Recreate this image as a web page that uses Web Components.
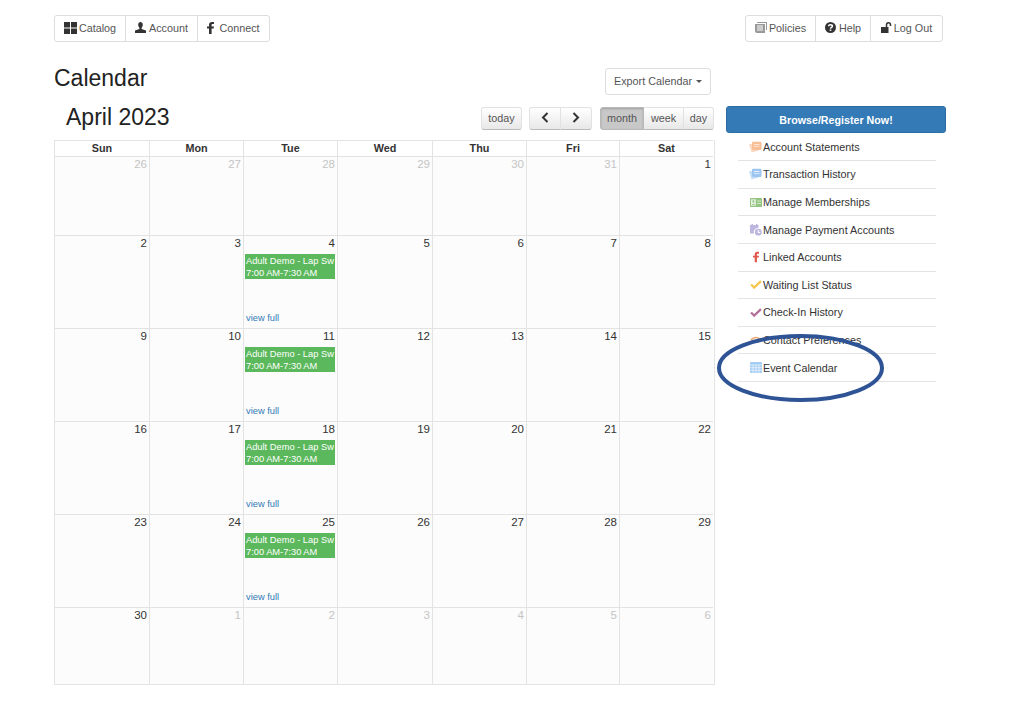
<!DOCTYPE html>
<html lang="en">
<head>
<meta charset="utf-8">
<title>Calendar</title>
<style>
html, body { margin: 0; padding: 0; background: #fff; }
body { font-family: "Liberation Sans", Arial, sans-serif; font-size: 11px; color: #333; }
</style>
</head>
<body>
<app-page></app-page>

<script>
const ICONS = {
  catalog: '<svg width="13" height="12" viewBox="0 0 13 12"><path fill="#333" d="M0 0h6v5.500H0zM7 0h6v5.500H7zM0 6.500h6V12H0zM7 6.500h6V12H7z"/></svg>',
  account: '<svg width="11" height="11" viewBox="0 0 11 11"><path fill="#333" d="M3.200 2.800C3.200 1 4.200 0 5.500 0s2.300 1 2.300 2.800c0 1.300-.6 2.500-1.200 3v1.100L11 8.600V11H0V8.600l4.400-1.700V5.800c-.6-.5-1.200-1.700-1.200-3z"/></svg>',
  connect: '<svg width="7" height="12" viewBox="0 0 7 12"><path fill="#333" d="M2 12V6.600H0V4.500h2V3C2 1 3.100 0 4.900 0H7v2.100H5.600c-.8 0-1 .4-1 1v1.400H7l-.3 2.100H4.600V12z"/></svg>',
  policies: '<svg width="12" height="11" viewBox="0 0 12 11"><path fill="#999" d="M2 0h10v8h-1V1H2zM0 2h10v9H2a2 2 0 0 1-2-2zm2 1.500v1h6v-1zm0 2v1h6v-1zm0 2v1h6v-1z" fill-rule="evenodd"/></svg>',
  help: '<svg width="11" height="11" viewBox="0 0 12 12"><circle cx="6" cy="6" r="6" fill="#333"/><path fill="none" stroke="#fff" stroke-width="1.700" d="M3.900 4.600C4 3.400 4.900 2.900 6 2.900c1.200 0 2.100.6 2.100 1.600 0 1.500-2.100 1.400-2.100 2.800"/><path fill="#fff" d="M5.100 8.200h1.800v1.500H5.100z"/></svg>',
  logout: '<svg width="11" height="11" viewBox="0 0 11 11"><path fill="#333" d="M0 5h7.500v6H0z"/><path fill="none" stroke="#333" stroke-width="1.500" d="M5.500 5V3c0-1.300.8-2.200 2-2.200s2 .9 2 2.200v1"/></svg>',
  statements: '<svg width="13" height="12" viewBox="0 0 13 12"><path fill="#fbd9c2" d="M0 3.500 8 1.500l2 8-7.500 2z"/><rect x="3" y=".8" width="9.500" height="8.200" rx="1.200" fill="#f8bf97"/><path fill="#fde8da" d="M5 3h5.500v.9H5zM5 5.200h5.500v.9H5z"/></svg>',
  history: '<svg width="13" height="12" viewBox="0 0 13 12"><path fill="#c5def7" d="M0 3.500 8 1.500l2 8-7.500 2z"/><rect x="3" y=".8" width="9.500" height="8.200" rx="1.200" fill="#9cc5f0"/><path fill="#e2eefb" d="M5 3h5.500v.9H5zM5 5.200h5.500v.9H5z"/></svg>',
  memberships: '<svg width="12" height="9" viewBox="0 0 12 9"><rect width="12" height="9" rx=".8" fill="#93c481"/><rect x="1" y="1.300" width="4.800" height="6.400" fill="#e9f3e4"/><circle cx="3.400" cy="3.400" r="1.100" fill="#93c481"/><path fill="#93c481" d="M1.800 6.800c0-1.500 3.200-1.500 3.200 0z"/><path fill="#d3e7ca" d="M7 2.500h4v1H7zM7 5h4v1H7z"/></svg>',
  payment: '<svg width="12" height="12" viewBox="0 0 12 12"><path fill="#bdb7df" d="M0 1h1.500V0H3v1h3V0h1.500v1H8.500v3H8a4 4 0 0 0-4 5.500H0z"/><circle cx="8.300" cy="8.200" r="3.400" fill="#bdb7df"/><path fill="#fff" d="M7.800 6h1v2h1.400v1H7.800z"/></svg>',
  linked: '<svg width="6" height="12" viewBox="0 0 7 12"><path fill="#e2574c" d="M2 12V6.600H0V4.500h2V3C2 1 3.100 0 4.900 0H7v2.100H5.600c-.8 0-1 .4-1 1v1.400H7l-.3 2.100H4.600V12z"/></svg>',
  waiting: '<svg width="12" height="9" viewBox="0 0 13 10"><path fill="none" stroke="#f7c64f" stroke-width="2.600" d="M1 5l3.500 3.400L12 1.200"/></svg>',
  checkin: '<svg width="12" height="9" viewBox="0 0 13 10"><path fill="none" stroke="#b56f9b" stroke-width="2.600" d="M1 5l3.500 3.400L12 1.200"/></svg>',
  contact: '<svg width="12" height="10" viewBox="0 0 13 10"><path fill="none" stroke="#f2a568" stroke-width="1.800" d="M1 5c3-3.600 8-3.600 11 0"/><path fill="none" stroke="#f2a568" stroke-width="1.800" d="M3.300 7.500c2-2 4.400-2 6.400 0"/></svg>',
  calendar: '<svg width="12" height="11" viewBox="0 0 12 11"><rect width="12" height="11" rx=".8" fill="#a4cdf3"/><path stroke="#e8f2fc" stroke-width=".8" d="M0 3h12M0 5.700h12M0 8.300h12M3 3v8M6 3v8M9 3v8"/></svg>'
};

// a row of joined white buttons, top of the page
class NavGroup extends HTMLElement {
  connectedCallback() {
    if (this.shadowRoot) return;
    this.attachShadow({ mode: "open" });
    this.shadowRoot.innerHTML = `
    <style>
      :host { display: inline-flex; height: 25px; border: 1px solid #ddd; border-radius: 3px; background: #fff; box-sizing: content-box; }
    </style>
    <slot></slot>`;
  }
}

class NavItem extends HTMLElement {
  connectedCallback() {
    if (this.shadowRoot) return;
    this.attachShadow({ mode: "open" });
    const icon = ICONS[this.getAttribute("icon")];
    const w = this.getAttribute("w");
    this.shadowRoot.innerHTML = `
    <style>
      :host { display: flex; align-items: center; justify-content: center; gap: var(--gap, 2px); width: ${w}px; box-sizing: border-box; padding-bottom: 2px; font-size: 10.800px; color: #555; border-left: 1px solid #ddd; }
      :host(:first-child) { border-left: 0; }
      svg { display: block; }
    </style>
    ${icon}<slot></slot>`;
  }
}

// toolbar button, gray gradient like fullcalendar's
class CalButton extends HTMLElement {
  connectedCallback() {
    if (this.shadowRoot) return;
    this.attachShadow({ mode: "open" });
    this.shadowRoot.innerHTML = `
    <style>
      :host { display: flex; align-items: center; justify-content: center; height: 23px; width: var(--w); box-sizing: border-box; padding-bottom: 2px; font-size: 10.800px; color: #555; background: linear-gradient(#fff, #e8e8e8); border: 1px solid #e2e2e2; border-bottom-color: #bbb; border-left-width: 0; }
      :host(:first-child) { border-left-width: 1px; border-radius: 3px 0 0 3px; }
      :host(:last-child) { border-radius: 0 3px 3px 0; }
      :host(:first-child:last-child) { border-radius: 3px; }
      :host([active]) { background: #c8c8c8; border-color: #b8b8b8; box-shadow: inset 0 1px 2px rgba(0,0,0,.2); }
      svg { display: block; }
    </style>
    <slot></slot>`;
  }
}

class CalToolbar extends HTMLElement {
  connectedCallback() {
    if (this.shadowRoot) return;
    this.attachShadow({ mode: "open" });
    this.shadowRoot.innerHTML = `
    <style>
      :host { display: flex; align-items: center; height: 33px; }
      h2 { margin: 0 0 3px 12px; font: 400 23px "Liberation Sans", Arial, sans-serif; color: #222; flex: 1; }
      .grp { display: flex; }
      .wrap { display: flex; gap: 7px; }
      .grp:last-child { margin-left: 1px; }
    </style>
    <h2><slot name="title"></slot></h2>
    <div class="wrap">
      <div class="grp"><cal-button style="--w:41px">today</cal-button></div>
      <div class="grp">
        <cal-button style="--w:32px"><svg width="8" height="11" viewBox="0 0 8 11"><path fill="none" stroke="#333" stroke-width="2" d="M6.500 1 2 5.500 6.500 10"/></svg></cal-button>
        <cal-button style="--w:31px"><svg width="8" height="11" viewBox="0 0 8 11"><path fill="none" stroke="#333" stroke-width="2" d="M1.500 1 6 5.500 1.500 10"/></svg></cal-button>
      </div>
      <div class="grp">
        <cal-button active style="--w:44px">month</cal-button>
        <cal-button style="--w:40px">week</cal-button>
        <cal-button style="--w:30px">day</cal-button>
      </div>
    </div>`;
  }
}

class CalCell extends HTMLElement {
  connectedCallback() {
    if (this.shadowRoot) return;
    this.attachShadow({ mode: "open" });
    const muted = this.hasAttribute("muted");
    const event = this.hasAttribute("event");
    this.shadowRoot.innerHTML = `
    <style>
      :host { display: flex; flex-direction: column; box-sizing: border-box; background: #fcfcfc; border-left: 1px solid #e3e3e3; border-top: 1px solid #e3e3e3; min-width: 0; font-size: 11.500px; }
      .num { text-align: right; padding: 0 2px 0 0; line-height: 14px; color: ${muted ? "#c4c4c4" : "#333"}; }
      .ev { margin: 4px 2px 0 1px; padding: 1px 0 1px 1px; height: 25px; box-sizing: border-box; background: #5cb85c; color: #fff; font-size: 9.300px; line-height: 12px; white-space: nowrap; }
      a { margin-top: auto; padding: 0 0 4px 2px; font-size: 9.300px; line-height: 12px; color: #337ab7; text-decoration: none; }
    </style>
    <div class="num"><slot></slot></div>
    ${event ? `<div class="ev">Adult Demo - Lap Sw<br>7:00 AM-7:30 AM</div><a href="#">view full</a>` : ""}`;
  }
}

class CalGrid extends HTMLElement {
  connectedCallback() {
    if (this.shadowRoot) return;
    this.attachShadow({ mode: "open" });
    const days = ["Sun", "Mon", "Tue", "Wed", "Thu", "Fri", "Sat"];
    const nums = [26, 27, 28, 29, 30, 31, 1, 2, 3, 4, 5, 6, 7, 8, 9, 10, 11, 12, 13, 14, 15, 16, 17, 18, 19, 20, 21, 22, 23, 24, 25, 26, 27, 28, 29, 30, 1, 2, 3, 4, 5, 6];
    let cells = "";
    nums.forEach((n, i) => {
      const muted = i < 6 || i > 35;
      const ev = i == 9 || i == 16 || i == 23 || i == 30;
      cells += `<cal-cell ${muted ? "muted" : ""} ${ev ? "event" : ""}>${n}</cal-cell>`;
    });
    this.shadowRoot.innerHTML = `
    <style>
      :host { display: grid; grid-template-columns: 95px 94px 94px 95px 94px 93px 94px; grid-template-rows: 16px 79px 93px 93px 93px 93px 77px; width: 660px; box-sizing: content-box; border-right: 1px solid #e3e3e3; border-bottom: 1px solid #e3e3e3; }
      .h { display: flex; align-items: center; justify-content: center; box-sizing: border-box; padding-bottom: 2px; font-weight: 700; font-size: 10.800px; color: #333; border-left: 1px solid #e3e3e3; border-top: 1px solid #e3e3e3; }
    </style>
    ${days.map(d => `<div class="h">${d}</div>`).join("")}
    ${cells}`;
  }
}

class SideItem extends HTMLElement {
  connectedCallback() {
    if (this.shadowRoot) return;
    this.attachShadow({ mode: "open" });
    this.shadowRoot.innerHTML = `
    <style>
      :host { display: flex; align-items: center; box-sizing: border-box; height: 27.600px; margin: 0 10px 0 12px; border-bottom: 1px solid #e3e3e3; font-size: 10.800px; color: #333; }
      .i { width: 25px; flex: none; padding-left: 11px; box-sizing: border-box; display: flex; justify-content: center; padding-right: 1px; }
      svg { display: block; }
    </style>
    <div class="i">${ICONS[this.getAttribute("icon")]}</div><slot></slot>`;
  }
}

class SideMenu extends HTMLElement {
  connectedCallback() {
    if (this.shadowRoot) return;
    this.attachShadow({ mode: "open" });
    this.shadowRoot.innerHTML = `
    <style>
      :host { display: block; width: 220px; position: relative; }
      .go { height: 27px; margin-bottom: .6px; background: #337ab7; border: 1px solid #2e6da4; border-radius: 3px; box-sizing: border-box; color: #fff; font-weight: 700; font-size: 10.700px; display: flex; align-items: center; justify-content: center; }
      .ring { position: absolute; left: -9px; top: 226px; pointer-events: none; }
    </style>
    <div class="go">Browse/Register Now!</div>
    <slot></slot>
    <svg class="ring" width="168" height="72" viewBox="0 0 168 72"><ellipse cx="83.500" cy="36" rx="81.500" ry="32" fill="none" stroke="#2f5496" stroke-width="4"/></svg>`;
  }
}

class AppPage extends HTMLElement {
  connectedCallback() {
    if (this.shadowRoot) return;
    this.attachShadow({ mode: "open" });
    this.shadowRoot.innerHTML = `
    <style>
      :host { display: block; padding: 15px 0 0 54px; width: 1024px; height: 705px; box-sizing: border-box; overflow: hidden; font-family: "Liberation Sans", Arial, sans-serif; }
      .top { display: flex; justify-content: space-between; width: 889px; }
      .cols { display: flex; gap: 11px; margin-top: 26px; align-items: flex-start; }
      .main { width: 661px; }
      .head { display: flex; align-items: center; justify-content: space-between; height: 27px; width: 657px; }
      h1 { margin: 0 0 6px; font: 400 23px "Liberation Sans", Arial, sans-serif; color: #222; }
      .export { display: flex; align-items: center; gap: 4px; height: 27px; width: 106px; padding-bottom: 1px; justify-content: center; box-sizing: border-box; border: 1px solid #ddd; border-radius: 3px; font-size: 10.800px; color: #555; }
      .caret { width: 0; height: 0; border: 3px solid transparent; border-top-color: #555; border-bottom: 0; }
      side-menu { margin-top: 38px; }
      cal-toolbar { margin-top: 7px; margin-bottom: 5px; width: 660px; }
    </style>
    <div class="top">
      <nav-group>
        <nav-item icon="catalog" w="70">Catalog</nav-item>
        <nav-item icon="account" w="72" style="--gap:3px">Account</nav-item>
        <nav-item icon="connect" w="72" style="--gap:5px">Connect</nav-item>
      </nav-group>
      <nav-group>
        <nav-item icon="policies" w="69">Policies</nav-item>
        <nav-item icon="help" w="55" style="--gap:3px">Help</nav-item>
        <nav-item icon="logout" w="72">Log Out</nav-item>
      </nav-group>
    </div>
    <div class="cols">
      <div class="main">
        <div class="head"><h1>Calendar</h1><div class="export">Export Calendar <span class="caret"></span></div></div>
        <cal-toolbar><span slot="title">April 2023</span></cal-toolbar>
        <cal-grid></cal-grid>
      </div>
      <side-menu>
        <side-item icon="statements">Account Statements</side-item>
        <side-item icon="history">Transaction History</side-item>
        <side-item icon="memberships">Manage Memberships</side-item>
        <side-item icon="payment">Manage Payment Accounts</side-item>
        <side-item icon="linked">Linked Accounts</side-item>
        <side-item icon="waiting">Waiting List Status</side-item>
        <side-item icon="checkin">Check-In History</side-item>
        <side-item icon="contact">Contact Preferences</side-item>
        <side-item icon="calendar">Event Calendar</side-item>
      </side-menu>
    </div>`;
  }
}

customElements.define("nav-group", NavGroup);
customElements.define("nav-item", NavItem);
customElements.define("cal-button", CalButton);
customElements.define("cal-toolbar", CalToolbar);
customElements.define("cal-cell", CalCell);
customElements.define("cal-grid", CalGrid);
customElements.define("side-item", SideItem);
customElements.define("side-menu", SideMenu);
customElements.define("app-page", AppPage);
</script>
</body>
</html>
